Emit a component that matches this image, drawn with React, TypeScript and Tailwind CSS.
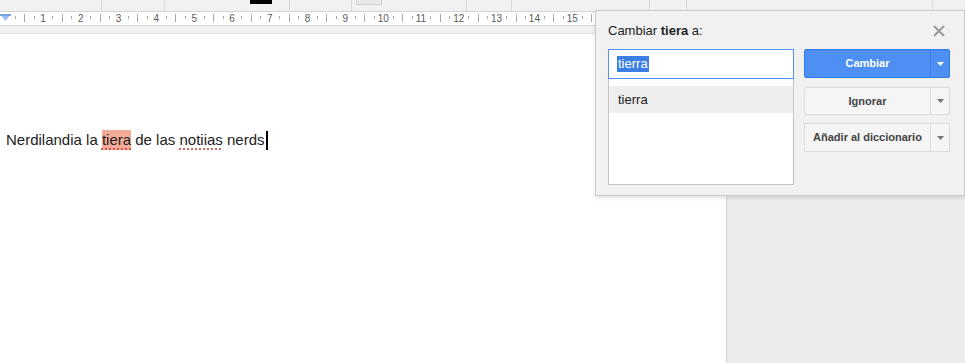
import React from "react";

const CM = 37.8;
const X0 = 5.2;
const RULER_W = 595;

function Ruler() {
    const ticks: { x: number; big: boolean }[] = [];
    for (let i = 0; i < 16; i++) {
        for (let q = 1; q < 4; q++) {
            const x = X0 + (i + q / 4) * CM;
            if (x < RULER_W - 2) ticks.push({ x, big: q === 2 });
        }
    }
    const nums = Array.from({ length: 15 }, (_, i) => i + 1);
    return (
        <svg width={RULER_W} height={13} className="block">
            {ticks.map((t, i) => (
                <line
                    key={i}
                    x1={Math.round(t.x) + 0.5}
                    x2={Math.round(t.x) + 0.5}
                    y1={t.big ? 2 : 4}
                    y2={t.big ? 10 : 7}
                    stroke="#a8a8a8"
                    strokeWidth={1}
                />
            ))}
            {nums.map((n) => (
                <text
                    key={n}
                    x={X0 + n * CM}
                    y={10}
                    textAnchor="middle"
                    fontSize={10}
                    fill="#5a5a5a"
                    fontFamily="'Liberation Sans', Arial, sans-serif"
                >
                    {n}
                </text>
            ))}
            <polygon points="0,2 11,2 5.5,9" fill="#9dbdf0" />
            <rect x={0} y={2} width={11} height={2} fill="#7aa3e6" />
        </svg>
    );
}

function Toolbar() {
    // widths of toolbar segments separated by thin lines
    const segs = [102, 63, 125, 62, 115, 45, 138, 37, 246];
    return (
        <div className="flex h-[11px] bg-[#f1f1f1]">
            {segs.map((w, i) => (
                <div key={i} className="relative h-full border-r border-[#dadada]" style={{ width: w }}>
                    {i === 2 && <div className="absolute left-[85px] top-0 h-[4px] w-[22px] bg-black" />}
                    {i === 4 && (
                        <div className="absolute left-[4px] top-0 h-[5px] w-[26px] rounded-b-[2px] border border-t-0 border-[#cfcfcf] bg-[#e8e8e8]" />
                    )}
                </div>
            ))}
            <div className="flex-1" />
        </div>
    );
}

function Caret({ light }: { light?: boolean }) {
    return (
        <svg width="7" height="4" viewBox="0 0 7 4" className="block">
            <polygon points="0,0 7,0 3.5,4" fill={light ? "#ffffff" : "#777777"} />
        </svg>
    );
}

function GrayButton({ label, h }: { label: string; h: string }) {
    return (
        <div className={`flex ${h} w-[146px] rounded-[2px] border border-[#dcdcdc] bg-[#f5f5f5]`}>
            <div className="flex flex-1 items-center justify-center text-[11px] font-bold text-[#444]">{label}</div>
            <div className="flex w-[19px] items-center justify-center border-l border-[#dcdcdc]">
                <Caret />
            </div>
        </div>
    );
}

function Dialog() {
    return (
        <div className="absolute left-[595px] top-[10px] h-[186px] w-[370px] border border-[#cacaca] bg-[#f1f1f1] pl-[12px] pr-[13px] pt-[12px] shadow-[0_2px_4px_rgba(0,0,0,0.12)]">
            <div className="mb-[10px] flex h-[16px] items-center justify-between pr-[6px]">
                <div className="text-[13px] leading-[16px] text-[#222]">
                    Cambiar <span className="font-bold">tiera</span> a:
                </div>
                <svg width="12" height="12" viewBox="0 0 12 12" className="block">
                    <path d="M1 1L11 11M11 1L1 11" stroke="#9a9a9a" strokeWidth="2" />
                </svg>
            </div>
            <div className="flex">
                <div className="w-[186px]">
                    <div className="flex h-[30px] items-center border border-[#4d90fe] bg-white pl-[8px]">
                        <span className="bg-[#3b7fe6] px-[1px] text-[13px] leading-[16px] text-white">tierra</span>
                    </div>
                    <div className="h-[106px] border border-t-0 border-[#c4c4c4] bg-white pt-[7px]">
                        <div className="flex h-[27px] items-center bg-[#eeeeee] pl-[9px] text-[13px] text-[#222]">tierra</div>
                    </div>
                </div>
                <div className="ml-[10px] flex flex-col">
                    <div className="flex h-[29px] w-[146px] rounded-[2px] border border-[#3079ed] bg-[#4d8ff3]">
                        <div className="flex flex-1 items-center justify-center text-[11px] font-bold text-white">Cambiar</div>
                        <div className="flex w-[19px] items-center justify-center border-l border-[#3b7ee8]">
                            <Caret light />
                        </div>
                    </div>
                    <div className="mt-[9px]">
                        <GrayButton label="Ignorar" h="h-[28px]" />
                    </div>
                    <div className="mt-[8px]">
                        <GrayButton label="Añadir al diccionario" h="h-[29px]" />
                    </div>
                </div>
            </div>
        </div>
    );
}

export default function App() {
    const misspelt = "underline decoration-dotted decoration-[#c53929] underline-offset-[4px]";
    return (
        <div className="relative flex h-[363px] w-[965px] flex-col overflow-hidden bg-white font-['Liberation_Sans',Arial,sans-serif]">
            <Toolbar />
            <div className="h-[23px] border-b border-[#e2e2e2] bg-[#f1f1f1]">
                <div className="h-[15px] w-[597px] border border-l-0 border-[#d4d4d4] bg-white">
                    <Ruler />
                </div>
            </div>
            <div className="flex flex-1">
                <div className="w-[726px] bg-white pl-[6px] pt-[96px]">
                    <p className="flex items-center text-[15px] leading-[20px] text-[#222]">
                        <span className="whitespace-pre">Nerdilandia la </span>
                        <span className={`bg-[#f4ab98] ${misspelt}`}>tiera</span>
                        <span className="whitespace-pre"> de las </span>
                        <span className={misspelt}>notiias</span>
                        <span className="whitespace-pre"> nerds</span>
                        <span className="ml-[1px] inline-block h-[19px] w-[2px] bg-black" />
                    </p>
                </div>
                <div className="flex-1 border-l border-[#d4d4d4] bg-[#ececec]" />
            </div>
            <Dialog />
        </div>
    );
}
